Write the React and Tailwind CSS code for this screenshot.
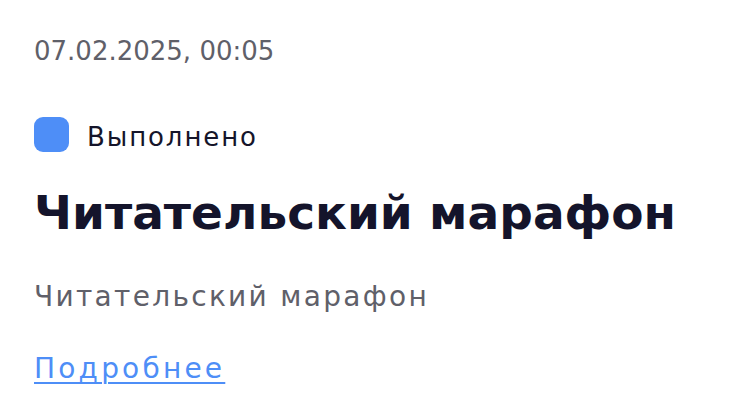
export default function App() {
  return (
    <div className="min-h-screen bg-white pl-[34px] pt-[33px] font-['DejaVu_Sans',sans-serif]">
      <p className="text-[26px] leading-[36px] text-[#5f6069]">07.02.2025, 00:05</p>
      <div className="mt-[48px] flex items-start gap-[18px]">
        <span className="h-[35px] w-[35px] shrink-0 rounded-[9px] bg-[#4e8ef7]" />
        <span className="mt-[2px] text-[26px] leading-[36px] tracking-[1.9px] text-[#15152a]">Выполнено</span>
      </div>
      <h1 className="mt-[30px] whitespace-nowrap text-[47px] leading-[56px] font-bold text-[#14142b]">Читательский марафон</h1>
      <p className="mt-[38px] text-[28px] leading-[36px] tracking-[2.3px] text-[#5f6069]">Читательский марафон</p>
      <a href="#" className="mt-[36px] block w-fit text-[28px] leading-[36px] tracking-[3.2px] text-[#4e8ef7] underline decoration-2 underline-offset-[4px]">Подробнее</a>
    </div>
  )
}
